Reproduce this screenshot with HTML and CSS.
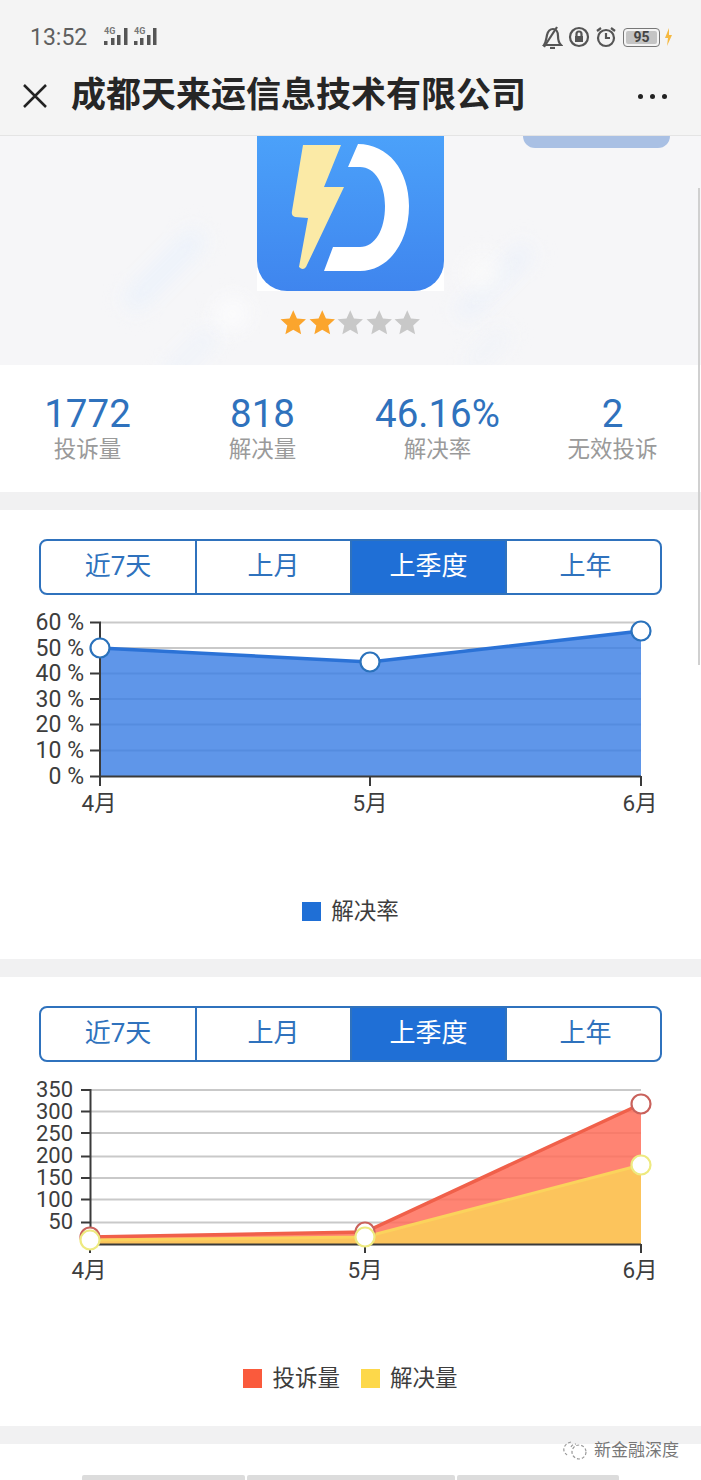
FILE: index.html
```html
<!DOCTYPE html>
<html lang="zh-CN">
<head>
    <meta charset="UTF-8">
    <meta name="viewport" content="width=device-width, initial-scale=1.0">
    <title>成都天来运信息技术有限公司</title>
    <link rel="stylesheet" href="styles.css">
</head>
<body>
    <div class="page">
        <header class="top-bar">
            <div class="status-bar">
                <div class="status-left">
                    <span class="clock">13:52</span>
                    <svg class="signal" width="62" height="20" viewBox="0 0 62 20">
                        <text x="7" y="7" class="net-label">4G</text>
                        <rect x="7" y="14" width="3.500" height="4"/><rect x="14" y="11" width="3.500" height="7"/><rect x="20" y="8" width="3.500" height="10"/><rect x="27" y="1" width="3.500" height="17"/>
                        <text x="37" y="7" class="net-label">4G</text>
                        <rect x="37" y="14" width="3.500" height="4"/><rect x="43" y="11" width="3.500" height="7"/><rect x="50" y="8" width="3.500" height="10"/><rect x="56" y="1" width="3.500" height="17"/>
                    </svg>
                </div>
                <div class="status-right">
                    <svg width="22" height="24" viewBox="0 0 22 24" fill="none" stroke="#555" stroke-width="2.200">
                        <path d="M3 20c2-3 2-5 3-10 1-4 3-6 6-6s5 3 5 7c0 4 1 7 3 9z"/><path d="M9 23h5"/><path d="M3 22 16 2"/>
                    </svg>
                    <svg width="22" height="24" viewBox="0 0 22 24" fill="none" stroke="#555" stroke-width="2.200">
                        <circle cx="11" cy="12" r="9"/><rect x="7" y="11" width="8" height="6" fill="#555" stroke="none"/><path d="M8.500 11V9a2.500 2.500 0 0 1 5 0v2"/>
                    </svg>
                    <svg width="22" height="24" viewBox="0 0 22 24" fill="none" stroke="#555" stroke-width="2.200">
                        <circle cx="11" cy="13" r="8"/><path d="M11 8v5h4"/><path d="M2 6l4-3M20 6l-4-3"/>
                    </svg>
                    <div class="battery"><span class="battery-level">95</span></div>
                    <svg class="bolt" width="7" height="18" viewBox="0 0 7 18"><path d="M4 0 0 10h3l-1 8 5-11H4z" fill="#f5b942"/></svg>
                </div>
            </div>
            <div class="nav-bar">
                <svg class="close-icon" width="26" height="26" viewBox="0 0 26 26" fill="none" stroke="#222" stroke-width="2.500">
                    <path d="M2 2l22 22M24 2 2 24"/>
                </svg>
                <h1 class="nav-title">成都天来运信息技术有限公司</h1>
                <div class="more-dots"><span></span><span></span><span></span></div>
            </div>
        </header>

        <section class="hero">
            <div class="hero-blobs">
                <span class="blob blob-a"></span>
                <span class="blob blob-b"></span>
                <span class="blob blob-c"></span>
                <span class="blob blob-d"></span>
                <span class="blob blob-e"></span>
                <span class="blob blob-f"></span>
            </div>
            <div class="hero-button"></div>
            <div class="app-icon">
                <div class="app-face">
                    <svg width="187" height="155" viewBox="257 136 187 155">
                        <path d="M303 145h38l-17 42h20l-38 80q-3 4-7 0l9-49-13-1q-4-1-3-6z" fill="#fbeaa6"/>
                        <path d="M358 144C388 144 409 170 409 206 409 243 388 271 360 271H324L333 247H360C375 247 385 230 385 206 385 184 375 167 360 167H348z" fill="#fff"/>
                    </svg>
                </div>
            </div>
            <div class="stars">
                <svg width="28.500" height="27" viewBox="0 0 24 24"><path class="star-on" d="M12 1l3.300 7.400 8 .8-6 5.400 1.700 7.900-7-4.100-7 4.100 1.700-7.900-6-5.400 8-.8z"/></svg>
                <svg width="28.500" height="27" viewBox="0 0 24 24"><path class="star-on" d="M12 1l3.300 7.400 8 .8-6 5.400 1.700 7.900-7-4.100-7 4.100 1.700-7.900-6-5.400 8-.8z"/></svg>
                <svg width="28.500" height="27" viewBox="0 0 24 24"><path class="star-off" d="M12 1l3.300 7.400 8 .8-6 5.400 1.700 7.900-7-4.100-7 4.100 1.700-7.900-6-5.400 8-.8z"/></svg>
                <svg width="28.500" height="27" viewBox="0 0 24 24"><path class="star-off" d="M12 1l3.300 7.400 8 .8-6 5.400 1.700 7.900-7-4.100-7 4.100 1.700-7.900-6-5.400 8-.8z"/></svg>
                <svg width="28.500" height="27" viewBox="0 0 24 24"><path class="star-off" d="M12 1l3.300 7.400 8 .8-6 5.400 1.700 7.900-7-4.100-7 4.100 1.700-7.900-6-5.400 8-.8z"/></svg>
            </div>
        </section>

        <section class="stats">
            <div class="stat"><strong>1772</strong><span>投诉量</span></div>
            <div class="stat"><strong>818</strong><span>解决量</span></div>
            <div class="stat"><strong>46.16%</strong><span>解决率</span></div>
            <div class="stat"><strong>2</strong><span>无效投诉</span></div>
        </section>

        <section class="card">
            <div class="tabs">
                <div class="tab">近7天</div>
                <div class="tab">上月</div>
                <div class="tab tab-active">上季度</div>
                <div class="tab">上年</div>
            </div>
            <svg class="chart" width="701" height="226" viewBox="0 601 701 226">
                <g class="grid">
                    <path d="M100 622.500H641M100 648H641M100 673.500H641M100 699H641M100 724.500H641M100 750.500H641"/>
                </g>
                <path d="M100 648 370 662 641 631V776H100z" fill="#3c7fe4" fill-opacity=".82"/>
                <path d="M100 648 370 662 641 631" fill="none" stroke="#2b72d6" stroke-width="3.500"/>
                <path class="axis" d="M90 622.500H100V776M90 648H100M90 673.500H100M90 699H100M90 724.500H100M90 750.500H100M90 776.500H641M100 776V786M370 776V786M641 776V786"/>
                <g class="y-labels">
                    <text x="84" y="630">60 %</text>
                    <text x="84" y="656">50 %</text>
                    <text x="84" y="681">40 %</text>
                    <text x="84" y="707">30 %</text>
                    <text x="84" y="732">20 %</text>
                    <text x="84" y="758">10 %</text>
                    <text x="84" y="784">0 %</text>
                </g>
                <g class="x-labels">
                    <text x="99" y="811">4月</text>
                    <text x="370" y="811">5月</text>
                    <text x="640" y="811">6月</text>
                </g>
                <g class="dot dot-blue">
                    <circle cx="100" cy="648" r="9.500"/>
                    <circle cx="370" cy="662" r="9.500"/>
                    <circle cx="641" cy="631" r="9.500"/>
                </g>
            </svg>
            <div class="legend">
                <div class="legend-item"><i class="swatch swatch-blue"></i>解决率</div>
            </div>
        </section>

        <section class="card">
            <div class="tabs">
                <div class="tab">近7天</div>
                <div class="tab">上月</div>
                <div class="tab tab-active">上季度</div>
                <div class="tab">上年</div>
            </div>
            <svg class="chart chart-counts" width="701" height="226" viewBox="0 1068 701 226">
                <g class="grid">
                    <path d="M90 1090H641M90 1111.500H641M90 1133H641M90 1156.500H641M90 1178H641M90 1199.500H641M90 1222.500H641"/>
                </g>
                <path d="M90 1237 365 1232 641 1104V1244H90z" fill="#ff6f5a" fill-opacity=".85"/>
                <path d="M90 1240 365 1237 641 1165V1244H90z" fill="#fcc45c"/>
                <path d="M90 1237 365 1232 641 1104" fill="none" stroke="#f0604a" stroke-width="3.500"/>
                <path d="M90 1240 365 1237 641 1165" fill="none" stroke="#fbd35c" stroke-width="3"/>
                <path class="axis" d="M81 1090H90.500V1244M81 1111.500H90M81 1133H90M81 1156.500H90M81 1178H90M81 1199.500H90M81 1222.500H90M90 1244.500H641M90 1244V1253M365 1244V1253M641 1244V1253"/>
                <g class="y-labels">
                    <text x="73" y="1097">350</text>
                    <text x="73" y="1119">300</text>
                    <text x="73" y="1141">250</text>
                    <text x="73" y="1163">200</text>
                    <text x="73" y="1185">150</text>
                    <text x="73" y="1207">100</text>
                    <text x="73" y="1229">50</text>
                </g>
                <g class="x-labels">
                    <text x="89" y="1278">4月</text>
                    <text x="365" y="1278">5月</text>
                    <text x="640" y="1278">6月</text>
                </g>
                <g class="dot dot-red">
                    <circle cx="90" cy="1237" r="9.500"/>
                    <circle cx="365" cy="1232" r="9.500"/>
                    <circle cx="641" cy="1104" r="9.500"/>
                </g>
                <g class="dot dot-yellow">
                    <circle cx="90" cy="1240" r="9.500"/>
                    <circle cx="365" cy="1237" r="9.500"/>
                    <circle cx="641" cy="1165" r="9.500"/>
                </g>
            </svg>
            <div class="legend">
                <div class="legend-item"><i class="swatch swatch-red"></i>投诉量</div>
                <div class="legend-item"><i class="swatch swatch-yellow"></i>解决量</div>
            </div>
        </section>

        <section class="table-strip">
            <span class="strip-a"></span>
            <span class="strip-b"></span>
            <span class="strip-c"></span>
        </section>

        <div class="scroll-thumb"></div>

        <div class="watermark">
            <svg width="26" height="20" viewBox="0 0 26 20" fill="none" stroke="#999" stroke-width="1.200" stroke-dasharray="3 2">
                <path d="M9 2C4 3 1 7 2 11c.5 2 2 3 3 4"/>
                <circle cx="17" cy="12" r="7"/>
                <path d="M9 7c1-2 3-3 5-3"/>
            </svg>
            <span>新金融深度</span>
        </div>
    </div>
</body>
</html>
```

FILE: styles.css
```css
:root {
    --primary-color: #2f72bd;
    --active-color: #1f6fd6;
    --gap-color: #f1f1f2;
    --text-color: #3d3d3d;
    --cjk-font: Roboto, "Noto Sans CJK SC", sans-serif;
}

* {
    margin: 0;
    padding: 0;
    box-sizing: border-box;
}

body {
    font-family: var(--cjk-font);
    background-color: white;
    color: var(--text-color);
}

.page {
    position: relative;
    width: 701px;
    height: 1480px;
    overflow: hidden;
}

/* status bar and title */
.top-bar {
    height: 136px;
    background-color: #f4f4f4;
    border-bottom: 1px solid #e4e4e4;
}

.status-bar {
    display: flex;
    justify-content: space-between;
    align-items: center;
    height: 74px;
    padding: 0 29px 0 30px;
}

.status-left,
.status-right {
    display: flex;
    align-items: center;
}

.status-right {
    gap: 5px;
}

.clock {
    font-size: 23px;
    color: #5f5f5f;
}

.signal {
    margin-left: 10px;
    fill: #555;
}

.net-label {
    font-size: 9px;
    font-weight: 700;
    fill: #777;
}

.battery {
    width: 37px;
    height: 19px;
    margin-left: 1px;
    padding: 2px;
    border: 1px solid #777;
    border-radius: 4px;
}

.battery-level {
    display: block;
    height: 100%;
    background-color: #c4c4c4;
    border-radius: 2px;
    font-size: 14px;
    font-weight: 700;
    line-height: 13px;
    text-align: center;
    color: #444;
}

.nav-bar {
    display: flex;
    align-items: center;
    height: 44px;
    padding: 0 34px 0 22px;
}

.close-icon {
    flex: none;
}

.nav-title {
    flex: 1;
    margin-left: 23px;
    font-size: 35px;
    font-weight: 700;
    line-height: 46px;
    color: #262626;
    white-space: nowrap;
}

.more-dots {
    display: flex;
    gap: 7px;
}

.more-dots span {
    width: 5px;
    height: 5px;
    border-radius: 50%;
    background-color: #222;
}

/* app header */
.hero {
    position: relative;
    display: flex;
    flex-direction: column;
    align-items: center;
    height: 229px;
    background-color: #f6f6f8;
    overflow: hidden;
}

.hero-blobs {
    position: absolute;
    inset: 0;
}

.blob {
    position: absolute;
    border-radius: 20px;
    filter: blur(10px);
    transform: rotate(-45deg);
}

.blob-a {
    left: 112px;
    top: 123px;
    width: 105px;
    height: 22px;
    background-color: #ecf2fb;
}

.blob-b {
    left: 155px;
    top: 210px;
    width: 70px;
    height: 18px;
    background-color: #eff3fa;
}

.blob-c {
    left: 445px;
    top: 137px;
    width: 100px;
    height: 18px;
    background-color: #ecf1fa;
}

.blob-d {
    left: 460px;
    top: 205px;
    width: 55px;
    height: 16px;
    background-color: #f0f3f8;
}

.blob-e {
    left: 215px;
    top: 163px;
    width: 34px;
    height: 30px;
    background-color: #fcfcfd;
}

.blob-f {
    left: 465px;
    top: 120px;
    width: 34px;
    height: 34px;
    background-color: #fafafa;
}

.hero-button {
    position: absolute;
    top: 0;
    left: 523px;
    width: 147px;
    height: 12px;
    background-color: #a9c0e4;
    border-radius: 0 0 14px 14px;
}

.app-icon {
    position: relative;
    width: 187px;
    height: 155px;
    background-color: white;
}

.app-face {
    height: 100%;
    background: linear-gradient(#4ba1fa, #3f85ee);
    border-radius: 0 0 30px 30px;
}

.app-icon svg {
    display: block;
}

.stars {
    position: relative;
    display: flex;
    margin-top: 18px;
}

.star-on {
    fill: #fba52d;
}

.star-off {
    fill: #c8c8c8;
}

/* summary numbers */
.stats {
    display: grid;
    grid-template-columns: repeat(4, 175px);
    height: 145px;
    padding-top: 27px;
    background-color: white;
    border-bottom: 18px solid var(--gap-color);
}

.stat {
    display: flex;
    flex-direction: column;
    align-items: center;
    white-space: nowrap;
}

.stat strong {
    font-size: 38.500px;
    font-weight: 400;
    line-height: 44px;
    color: var(--primary-color);
}

.stat span {
    font-size: 22.500px;
    line-height: 26px;
    color: #9a9a9a;
}

/* chart cards */
.card {
    height: 467px;
    padding-top: 29px;
    background-color: white;
    border-bottom: 18px solid var(--gap-color);
}

.tabs {
    display: grid;
    grid-template-columns: 156px 155px 155px 157px;
    width: 623px;
    height: 56px;
    margin-left: 39px;
    border: 2px solid var(--primary-color);
    border-radius: 8px;
    overflow: hidden;
}

.tab {
    font-size: 26px;
    line-height: 50px;
    text-align: center;
    color: var(--primary-color);
    border-right: 2px solid var(--primary-color);
}

.tab:last-child {
    border-right: none;
}

.tab-active {
    background-color: var(--active-color);
    color: white;
}

.chart {
    display: block;
    margin-top: 6px;
}

.grid path {
    fill: none;
    stroke: #c9c9c9;
    stroke-width: 2;
}

.axis {
    fill: none;
    stroke: #3a3a3a;
    stroke-width: 2;
}

.y-labels text {
    font-size: 23px;
    text-anchor: end;
    fill: var(--text-color);
}

.chart-counts .y-labels text {
    font-size: 22px;
}

.x-labels text {
    font-size: 22.500px;
    text-anchor: middle;
    fill: var(--text-color);
}

.dot circle {
    fill: white;
    stroke-width: 2.200;
}

.dot-blue circle {
    stroke: #2a72bc;
}

.dot-red circle {
    stroke: #c9625c;
}

.dot-yellow circle {
    stroke: #eeea80;
}

.legend {
    display: flex;
    justify-content: center;
    gap: 21px;
    margin-top: 70px;
    font-size: 22.500px;
    line-height: 28px;
}

.legend-item {
    display: flex;
    align-items: center;
    gap: 10px;
}

.swatch {
    width: 19px;
    height: 19px;
}

.swatch-blue {
    background-color: #1f6fd6;
}

.swatch-red {
    background-color: #fa5a3c;
}

.swatch-yellow {
    background-color: #fdd84a;
}

/* next table, cut off by the screen */
.table-strip {
    display: flex;
    gap: 2px;
    padding: 31px 0 0 82px;
}

.table-strip span {
    height: 6px;
    background-color: #dcdcdc;
    border-radius: 2px 2px 0 0;
}

.strip-a {
    width: 163px;
}

.strip-b {
    width: 208px;
}

.strip-c {
    width: 162px;
}

.scroll-thumb {
    position: absolute;
    top: 188px;
    right: 1px;
    width: 2px;
    height: 477px;
    background-color: #d0d0d0;
}

.watermark {
    position: absolute;
    top: 1439px;
    left: 562px;
    display: flex;
    align-items: center;
    gap: 6px;
    font-size: 17px;
    line-height: 22px;
    color: #777;
}
```
